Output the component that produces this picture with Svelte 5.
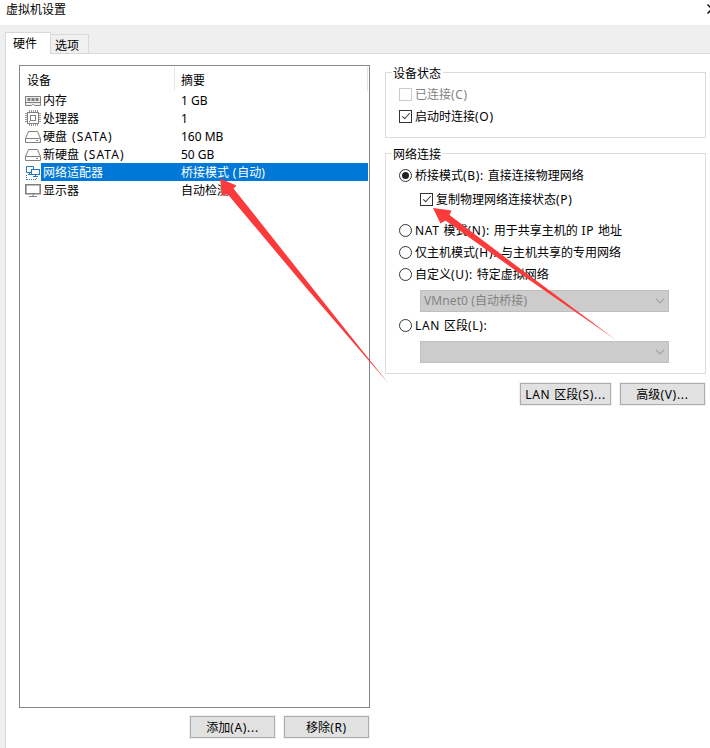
<script>
  let activeTab = 'hardware';
  let selected = 4;
  let mode = 'bridged';
  let connectAtPowerOn = true;
  let replicate = true;

  const devices = [
    { icon: 'memory', name: '内存', summary: '1 GB' },
    { icon: 'cpu', name: '处理器', summary: '1' },
    { icon: 'disk', name: '硬盘', suffix: '(SATA)', summary: '160 MB' },
    { icon: 'disk', name: '新硬盘', suffix: '(SATA)', summary: '50 GB' },
    { icon: 'network', name: '网络适配器', summary: '桥接模式 (自动)' },
    { icon: 'display', name: '显示器', summary: '自动检测' }
  ];

  // odd parts are the latin runs
  function splitLatin(text) {
    return text.split(/([\x20-\x7e]+)/);
  }
</script>

{#snippet label(text)}
  <span class="label">{#each splitLatin(text) as part, i}<span class:latin={i % 2 === 1}>{part}</span>{/each}</span>
{/snippet}

{#snippet chevron()}
  <svg width="10" height="6" viewBox="0 0 10 6"><path d="M1 0.8L5 4.8L9 0.8" fill="none" stroke="#a3a3a3" stroke-width="1.2" /></svg>
{/snippet}

<div class="window">
  <header class="title-bar">
    <span>虚拟机设置</span>
    <svg class="close" width="10" height="10" viewBox="0 0 10 10"><path d="M0.5 0.5L9.5 9.5M9.5 0.5L0.5 9.5" stroke="#000" stroke-width="1.3" fill="none" /></svg>
  </header>

  <nav class="tabs">
    <button class="tab" class:active={activeTab === 'hardware'} on:click={() => (activeTab = 'hardware')}>硬件</button>
    <button class="tab" class:active={activeTab === 'options'} on:click={() => (activeTab = 'options')}>选项</button>
  </nav>

  <main class="panel">
    <section class="left">
      <div class="device-list">
        <div class="list-header">
          <span class="col-device">设备</span>
          <span class="col-summary">摘要</span>
        </div>
        {#each devices as device, i}
          <button class="device" class:selected={selected === i} on:click={() => (selected = i)}>
            <svg class="icon" width="17" height="17" viewBox="0 0 17 17" fill="none" stroke="#808080">
              {#if device.icon === 'memory'}
                <path d="M0.5 4.5H15.5V13.5H9.5L8.5 12.5H7.5L6.5 13.5H0.5Z" fill="#eee" />
                <path d="M2.5 7.5H14" stroke-width="3" stroke-dasharray="3 1" />
                <path d="M1 10.5H15" />
              {:else if device.icon === 'cpu'}
                <path d="M4.5 0V3M6.5 0V3M8.5 0V3M10.5 0V3M12.5 0V3M4.5 13V16M6.5 13V16M8.5 13V16M10.5 13V16M12.5 13V16M0 3.5H3M0 5.5H3M0 7.5H3M0 9.5H3M0 11.5H3M13 3.5H16M13 5.5H16M13 7.5H16M13 9.5H16M13 11.5H16" stroke="#999" />
                <rect x="2.5" y="2.5" width="11" height="11" fill="#fff" />
                <rect x="5.5" y="5.5" width="5" height="5" />
                <path d="M4 11.5H5" />
              {:else if device.icon === 'disk'}
                <path d="M3.5 3.5H12.5L15.5 10.5V14.5H0.5V10.5Z" />
                <path d="M0.5 10.5H15.5M11 12.5H13" />
              {:else if device.icon === 'network'}
                <path d="M6 8.5H1.5V2.5H8.5V5M3 10.5H6M4.5 8.5V10.5" stroke="#2878b8" />
                <rect x="6.5" y="5.5" width="8" height="5" fill="#fff" stroke="#2878b8" />
                <path d="M8 12.5H13M10.5 11V12" stroke="#2878b8" />
                <path d="M1.5 11V16M2 15.5H11.5V13" stroke="#2878b8" stroke-dasharray="1 1" />
              {:else}
                <path d="M0.8 2.8H15.2V11.8H0.8Z" stroke-width="1.6" />
                <path d="M8 12V14M4 14.5H12" />
              {/if}
            </svg>
            <span class="name">{device.name}{#if device.suffix}<span class="suffix">{device.suffix}</span>{/if}</span>
            <span class="summary">
              {#if device.icon === 'network'}{@render label(device.summary)}{:else}{device.summary}{/if}
            </span>
          </button>
        {/each}
      </div>
      <div class="buttons">
        <button class="push">{@render label('添加(A)...')}</button>
        <button class="push">{@render label('移除(R)')}</button>
      </div>
    </section>

    <section class="right">
      <fieldset class="status">
        <legend>设备状态</legend>
        <label class="option disabled"><input type="checkbox" disabled />{@render label('已连接(C)')}</label>
        <label class="option"><input type="checkbox" bind:checked={connectAtPowerOn} />{@render label('启动时连接(O)')}</label>
      </fieldset>

      <fieldset class="network">
        <legend>网络连接</legend>
        <label class="option"><input type="radio" bind:group={mode} value="bridged" />{@render label('桥接模式(B): 直接连接物理网络')}</label>
        <label class="option nested"><input type="checkbox" bind:checked={replicate} />{@render label('复制物理网络连接状态(P)')}</label>
        <label class="option"><input type="radio" bind:group={mode} value="nat" />{@render label('NAT 模式(N): 用于共享主机的 IP 地址')}</label>
        <label class="option"><input type="radio" bind:group={mode} value="hostonly" />{@render label('仅主机模式(H): 与主机共享的专用网络')}</label>
        <label class="option"><input type="radio" bind:group={mode} value="custom" />{@render label('自定义(U): 特定虚拟网络')}</label>
        <div class="combo">
          <span>VMnet0 (自动桥接)</span>
          {@render chevron()}
        </div>
        <label class="option"><input type="radio" bind:group={mode} value="lan" />{@render label('LAN 区段(L):')}</label>
        <div class="combo">
          <span></span>
          {@render chevron()}
        </div>
      </fieldset>

      <div class="buttons">
        <button class="push wide">{@render label('LAN 区段(S)...')}</button>
        <button class="push">{@render label('高级(V)...')}</button>
      </div>
    </section>
  </main>

  <svg class="arrows" width="710" height="748" viewBox="0 0 710 748" fill="#fb3b3b">
    <path d="M220 178.5L236.5 185.5L233.5 188.5L314 290L388 383L308 290L227.5 194L222.5 196Z" />
    <path d="M433 208L451.5 210.5L449.5 215L512 262.5L616 340L512 268L445.5 220.5L440.5 223.5Z" />
  </svg>
</div>

<style>
  :global(body) {
    margin: 0;
    background: #fff;
  }

  .window {
    position: relative;
    width: 710px;
    height: 748px;
    overflow: hidden;
    display: flex;
    flex-direction: column;
    background: #fff;
    color: #000;
    font: 12px/18px "Noto Sans", "Noto Sans CJK SC", sans-serif;
    white-space: nowrap;
  }

  button {
    font: inherit;
    color: inherit;
    padding: 0;
  }

  .latin {
    letter-spacing: 0.7px;
  }

  .title-bar {
    display: flex;
    justify-content: space-between;
    height: 25px;
    box-sizing: border-box;
    padding: 1px 0 0 6px;
    margin-right: -7px;
    flex: none;
  }

  .close {
    margin-top: 3px;
  }

  .tabs {
    display: flex;
    align-items: flex-end;
    height: 28px;
    padding-left: 5px;
    background: #efefef;
    flex: none;
  }

  .tab {
    width: 38px;
    height: 19px;
    box-sizing: border-box;
    border: 1px solid #d9d9d9;
    border-width: 1px 1px 0 0;
    background: #f0f0f0;
    padding: 2px 5px 0 0;
    line-height: 17px;
  }

  .tab.active {
    width: 46px;
    height: 22px;
    margin-bottom: -1px;
    border-left-width: 1px;
    background: #fff;
    padding: 0 6px 0 0;
    z-index: 1;
  }

  .panel {
    flex: 1;
    display: flex;
    gap: 15px;
    margin-left: 5px;
    border: 1px solid #d9d9d9;
    border-width: 1px 0 0 1px;
    padding: 11px 0 0 13px;
    box-shadow: -5px 0 0 #efefef;
  }

  .left {
    width: 351px;
  }

  .device-list {
    height: 643px;
    box-sizing: border-box;
    border: 1px solid #828790;
    padding: 1px;
  }

  .list-header {
    display: flex;
    height: 24px;
    line-height: 27px;
    border-right: 1px solid #e5e5e5;
  }

  .col-device {
    width: 147px;
    padding-left: 6px;
    border-right: 1px solid #e5e5e5;
  }

  .col-summary {
    padding-left: 6px;
  }

  .device {
    display: flex;
    width: 100%;
    height: 18px;
    border: 0;
    background: none;
    line-height: 19px;
    text-align: left;
  }

  .icon {
    margin: 1px -1px 0 4px;
    flex: none;
  }

  .name {
    width: 133px;
    padding-left: 2px;
  }

  .suffix {
    margin-left: 5px;
    letter-spacing: 1.1px;
  }

  .summary {
    flex: 1;
    padding-left: 5px;
  }

  .selected .name,
  .selected .summary {
    background: #0078d7;
    color: #fff;
  }

  .buttons {
    display: flex;
    justify-content: flex-end;
    gap: 9px;
    margin-top: 8px;
    padding-right: 1px;
  }

  .push {
    width: 85px;
    height: 22px;
    box-sizing: border-box;
    border: 1px solid #adadad;
    background: #e1e1e1;
    box-shadow: 0 0 0 1px #f0f0f0;
    line-height: 21px;
  }

  .push.wide {
    width: 91px;
  }

  .right {
    width: 321px;
    padding-top: 7px;
  }

  fieldset {
    position: relative;
    box-sizing: border-box;
    margin: 0;
    border: 1px solid #dcdcdc;
    padding: 12px 0 0 13px;
    min-width: 0;
  }

  /* caption sits on top of the frame line */
  legend {
    position: absolute;
    top: -9px;
    left: 6px;
    padding: 0 2px 0 1px;
    background: #fff;
    line-height: 19px;
  }

  .status {
    height: 66px;
    margin-bottom: 15px;
  }

  .network {
    height: 221px;
  }

  .option {
    display: flex;
    align-items: center;
    gap: 3px;
    height: 19px;
    margin-bottom: 3px;
    line-height: 19px;
  }

  .option.nested {
    margin: 5px 0 12px 21px;
  }

  .disabled {
    color: #838383;
  }

  input {
    appearance: none;
    position: relative;
    width: 13px;
    height: 13px;
    box-sizing: border-box;
    margin: 0;
    border: 1px solid #333;
    background: #fff;
    flex: none;
  }

  input:disabled {
    border-color: #ccc;
  }

  input[type='radio'] {
    border-radius: 50%;
  }

  input[type='radio']:checked::after {
    content: '';
    position: absolute;
    inset: 2px;
    border-radius: 50%;
    background: #222;
  }

  input[type='checkbox']:checked::after {
    content: '';
    position: absolute;
    left: 4px;
    top: 0;
    width: 3px;
    height: 7px;
    border: solid #333;
    border-width: 0 1.3px 1.3px 0;
    transform: rotate(42deg);
  }

  .combo {
    display: flex;
    align-items: center;
    justify-content: space-between;
    width: 249px;
    height: 22px;
    box-sizing: border-box;
    margin: 6px 0 4px 21px;
    border: 1px solid #bfbfbf;
    padding: 0 3px;
    background: #ccc;
    color: #838383;
    letter-spacing: 0.1px;
  }

  .right .buttons {
    margin-top: 9px;
  }

  .arrows {
    position: absolute;
    inset: 0;
    pointer-events: none;
  }
</style>
